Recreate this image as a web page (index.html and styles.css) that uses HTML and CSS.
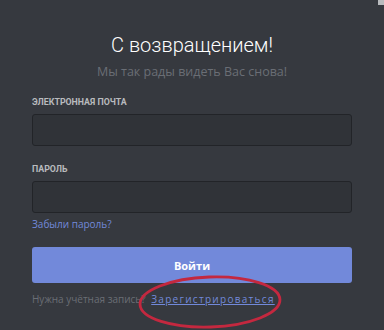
FILE: index.html
```html
<!DOCTYPE html>
<html lang="ru">

<head>
    <meta charset="UTF-8">
    <meta name="viewport" content="width=device-width, initial-scale=1.0">
    <title>Вход</title>
    <link rel="stylesheet" href="styles.css">
</head>

<body>
    <div class="corner"></div>

    <!-- Login form -->
    <form class="auth-box" onsubmit="return false">
        <h1 class="title">С возвращением!</h1>
        <p class="subtitle">Мы так рады видеть Вас снова!</p>

        <label class="field">
            <span class="field-label">Электронная почта</span>
            <input class="field-input" type="email">
        </label>

        <label class="field">
            <span class="field-label">Пароль</span>
            <input class="field-input" type="password">
        </label>

        <a href="#" class="forgot">Забыли пароль?</a>

        <button type="submit" class="login-btn">Войти</button>

        <div class="register">
            <span class="register-text">Нужна учётная запись?</span>
            <a href="#" class="register-link">Зарегистрироваться</a>
            <svg class="marker" width="150" height="56" viewBox="0 0 150 56">
                <ellipse cx="74" cy="28" rx="70" ry="25" fill="none" stroke="#c4283f" stroke-width="2.8"
                    transform="rotate(-2 74 28)" />
            </svg>
        </div>
    </form>
</body>

</html>
```

FILE: styles.css
```css
body {
    margin: 0;
    padding: 0;
    font-family: "Open Sans", "Noto Sans", sans-serif;
    background: #36393f;
    color: #dcddde;
    height: 330px;
    overflow: hidden;
}

.corner {
    position: absolute;
    top: 0;
    right: 0;
    width: 6px;
    height: 5px;
    background: #b9bbbe;
}

.auth-box {
    width: 320px;
    padding: 28px 32px 0;
    display: flex;
    flex-direction: column;
}

.title {
    margin: 0;
    font-family: Roboto, sans-serif;
    font-size: 20px;
    font-weight: 300;
    line-height: 34px;
    color: #ffffff;
    text-align: center;
}

.subtitle {
    margin: 2px 0 0;
    font-size: 12.5px;
    line-height: 16px;
    color: #6a6e75;
    text-align: center;
}

.field {
    display: flex;
    flex-direction: column;
    margin-top: 16px;
}

.field + .field {
    margin-top: 17px;
}

.field-label {
    font-family: Roboto, sans-serif;
    font-size: 8.8px;
    font-weight: 700;
    line-height: 12px;
    text-transform: uppercase;
    color: #b9bbbe;
    margin-bottom: 6px;
}

.field-input {
    box-sizing: border-box;
    height: 32px;
    width: 100%;
    margin: 0;
    background: #303338;
    border: 1px solid #222428;
    border-radius: 3px;
    color: #dcddde;
}

.forgot {
    margin-top: 3px;
    font-size: 10px;
    line-height: 16px;
    color: #7289da;
    text-decoration: none;
    align-self: flex-start;
}

.login-btn {
    margin-top: 15px;
    height: 36px;
    border: none;
    border-radius: 3px;
    background: #7289da;
    color: #ffffff;
    font-family: inherit;
    font-size: 11px;
    font-weight: 700;
}

.register {
    position: relative;
    margin-top: 9px;
    font-size: 10px;
    line-height: 14px;
}

.register-text {
    color: #6a6e75;
}

.register-link {
    color: #7289da;
    margin-left: 3px;
    letter-spacing: 1.3px;
}

.marker {
    position: absolute;
    left: 104px;
    top: -18px;
}
```
